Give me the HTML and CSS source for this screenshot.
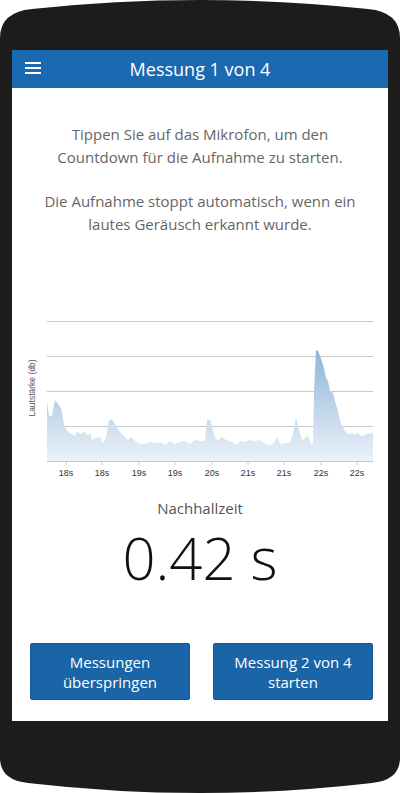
FILE: index.html
```html
<!DOCTYPE html>
<html lang="de">
<head>
  <meta charset="UTF-8" />
  <title>Messung 1 von 4</title>
  <link rel="stylesheet" href="styles.css">
</head>
<body>
  <div class="phone">
    <div class="screen">
      <header class="topbar">
        <span class="menu-icon"><i></i><i></i><i></i></span>
        <h1>Messung 1 von 4</h1>
      </header>

      <div class="intro">
        <p>Tippen Sie auf das Mikrofon, um den Countdown für die Aufnahme zu starten.</p>
        <p>Die Aufnahme stoppt automatisch, wenn ein lautes Geräusch erkannt wurde.</p>
      </div>

      <!-- Pegelverlauf, Koordinaten im viewBox entsprechen der Seite -->
      <svg class="chart" width="376" height="185" viewBox="12 300 376 185">
        <defs>
          <linearGradient id="fill" x1="0" y1="330" x2="0" y2="461" gradientUnits="userSpaceOnUse">
            <stop offset="0" stop-color="#7fa9d2" />
            <stop offset="1" stop-color="#ebf2f9" />
          </linearGradient>
        </defs>
        <g class="grid">
          <line x1="47" y1="321.5" x2="373" y2="321.5" />
          <line x1="47" y1="356.5" x2="373" y2="356.5" />
          <line x1="47" y1="391.5" x2="373" y2="391.5" />
          <line x1="47" y1="426.5" x2="373" y2="426.5" />
        </g>
        <path class="area" fill="url(#fill)" d="M47 461 L47 402 L49 416 L52 416 L55 400 L58 404 L61 408 L64 424 L66 429 L68 432 L72 434 L75 436 L77 431 L80 434 L85 432 L88 436 L90 433 L92 440 L95 438 L100 437 L103 443 L106 438 L109 421 L112 419 L116 426 L120 432 L125 437 L128 440 L131 437 L135 441 L140 444 L145 444 L150 442 L155 443 L160 442 L165 445 L170 441 L175 444 L180 442 L185 441 L190 444 L195 440 L200 441 L205 441 L207 420 L210 420 L212 426 L215 438 L218 440 L222 437 L226 440 L232 442 L237 445 L240 441 L245 442 L250 440 L255 441 L260 440 L265 444 L270 445 L274 443 L277 437 L280 444 L285 443 L290 443 L293 434 L296 418 L299 430 L302 440 L305 438 L308 435 L311 444 L313 444 L314 392 L316 350 L318 351 L320 356 L322 362 L324 368 L326 378 L328 381 L330 391 L333 393 L335 401 L338 411 L340 421 L343 427 L346 433 L350 434 L353 433 L355 435 L358 432 L360 436 L365 435 L368 433 L370 434 L373 432 L373 461 Z" />
        <line class="axis" x1="47" y1="461.5" x2="373" y2="461.5" />
        <g class="ticks">
          <line x1="66" y1="461" x2="66" y2="465" />
          <line x1="102" y1="461" x2="102" y2="465" />
          <line x1="139" y1="461" x2="139" y2="465" />
          <line x1="175" y1="461" x2="175" y2="465" />
          <line x1="212" y1="461" x2="212" y2="465" />
          <line x1="248" y1="461" x2="248" y2="465" />
          <line x1="284" y1="461" x2="284" y2="465" />
          <line x1="321" y1="461" x2="321" y2="465" />
          <line x1="357" y1="461" x2="357" y2="465" />
        </g>
        <g class="labels">
          <text x="66" y="476">18s</text>
          <text x="102" y="476">18s</text>
          <text x="139" y="476">19s</text>
          <text x="175" y="476">19s</text>
          <text x="212" y="476">20s</text>
          <text x="248" y="476">21s</text>
          <text x="284" y="476">21s</text>
          <text x="321" y="476">22s</text>
          <text x="357" y="476">22s</text>
        </g>
        <text class="ylabel" x="35" y="388" transform="rotate(-90 35 388)">Lautstärke (db)</text>
      </svg>

      <div class="result">
        <div class="result-label">Nachhallzeit</div>
        <div class="result-value">0.42 s</div>
      </div>

      <div class="actions">
        <button type="button">Messungen überspringen</button>
        <button type="button">Messung 2 von 4 starten</button>
      </div>
    </div>
  </div>
</body>
</html>
```

FILE: styles.css
```css
body {
  margin: 0;
  background: #fff;
  font-family: "Open Sans", sans-serif;
}
.phone {
  width: 400px;
  height: 793px;
  padding-top: 50px;
  box-sizing: border-box;
  background: #1c1c1c;
  clip-path: path('M0 38 Q0 12 32 9 Q200 -9 368 9 Q400 12 400 38 L400 758 Q400 780 372 783 Q200 803 28 783 Q0 780 0 758 Z');
}
.screen {
  margin: 0 12px;
  height: 671px;
  background: #fff;
  display: flex;
  flex-direction: column;
}
.topbar {
  height: 38px;
  background: #1b69b0;
  display: flex;
  align-items: center;
  justify-content: center;
  position: relative;
}
.topbar h1 {
  margin: 0;
  color: #fff;
  font-size: 18px;
  font-weight: 400;
}
.menu-icon {
  position: absolute;
  left: 13px;
  top: 12px;
  width: 16px;
  display: flex;
  flex-direction: column;
  gap: 3px;
}
.menu-icon i {
  display: block;
  height: 2px;
  background: #fff;
}
.intro {
  padding: 35px 20px 0;
  text-align: center;
  color: #666;
  font-size: 15px;
  line-height: 22.5px;
}
.intro p {
  margin: 0 0 22px;
}
.chart {
  display: block;
  margin-top: 43px;
}
.grid line {
  stroke: #c9c9c9;
  stroke-width: 1;
}
.axis {
  stroke: #c9c9c9;
  stroke-width: 1;
}
.ticks line {
  stroke: #c9c9c9;
  stroke-width: 1;
}
.labels text {
  font-family: "Liberation Sans", Arial, sans-serif;
  font-size: 9px;
  fill: #333;
  text-anchor: middle;
}
.ylabel {
  font-family: "Liberation Sans", Arial, sans-serif;
  font-size: 8.5px;
  fill: #555;
  text-anchor: middle;
}
.result {
  text-align: center;
  margin-top: 12px;
}
.result-label {
  color: #555;
  font-size: 15px;
  line-height: 22px;
}
.result-value {
  color: #111;
  font-size: 58px;
  font-weight: 300;
  line-height: 70px;
  margin-top: 4px;
}
.actions {
  margin-top: auto;
  padding: 0 15px 21px 18px;
  display: flex;
  gap: 23px;
}
.actions button {
  flex: 1;
  height: 57px;
  padding: 0 10px;
  background: #1a65a8;
  color: #fff;
  border: 1px solid #15589a;
  border-radius: 2px;
  font-family: "Open Sans", sans-serif;
  font-size: 15px;
  line-height: 20px;
}
```
